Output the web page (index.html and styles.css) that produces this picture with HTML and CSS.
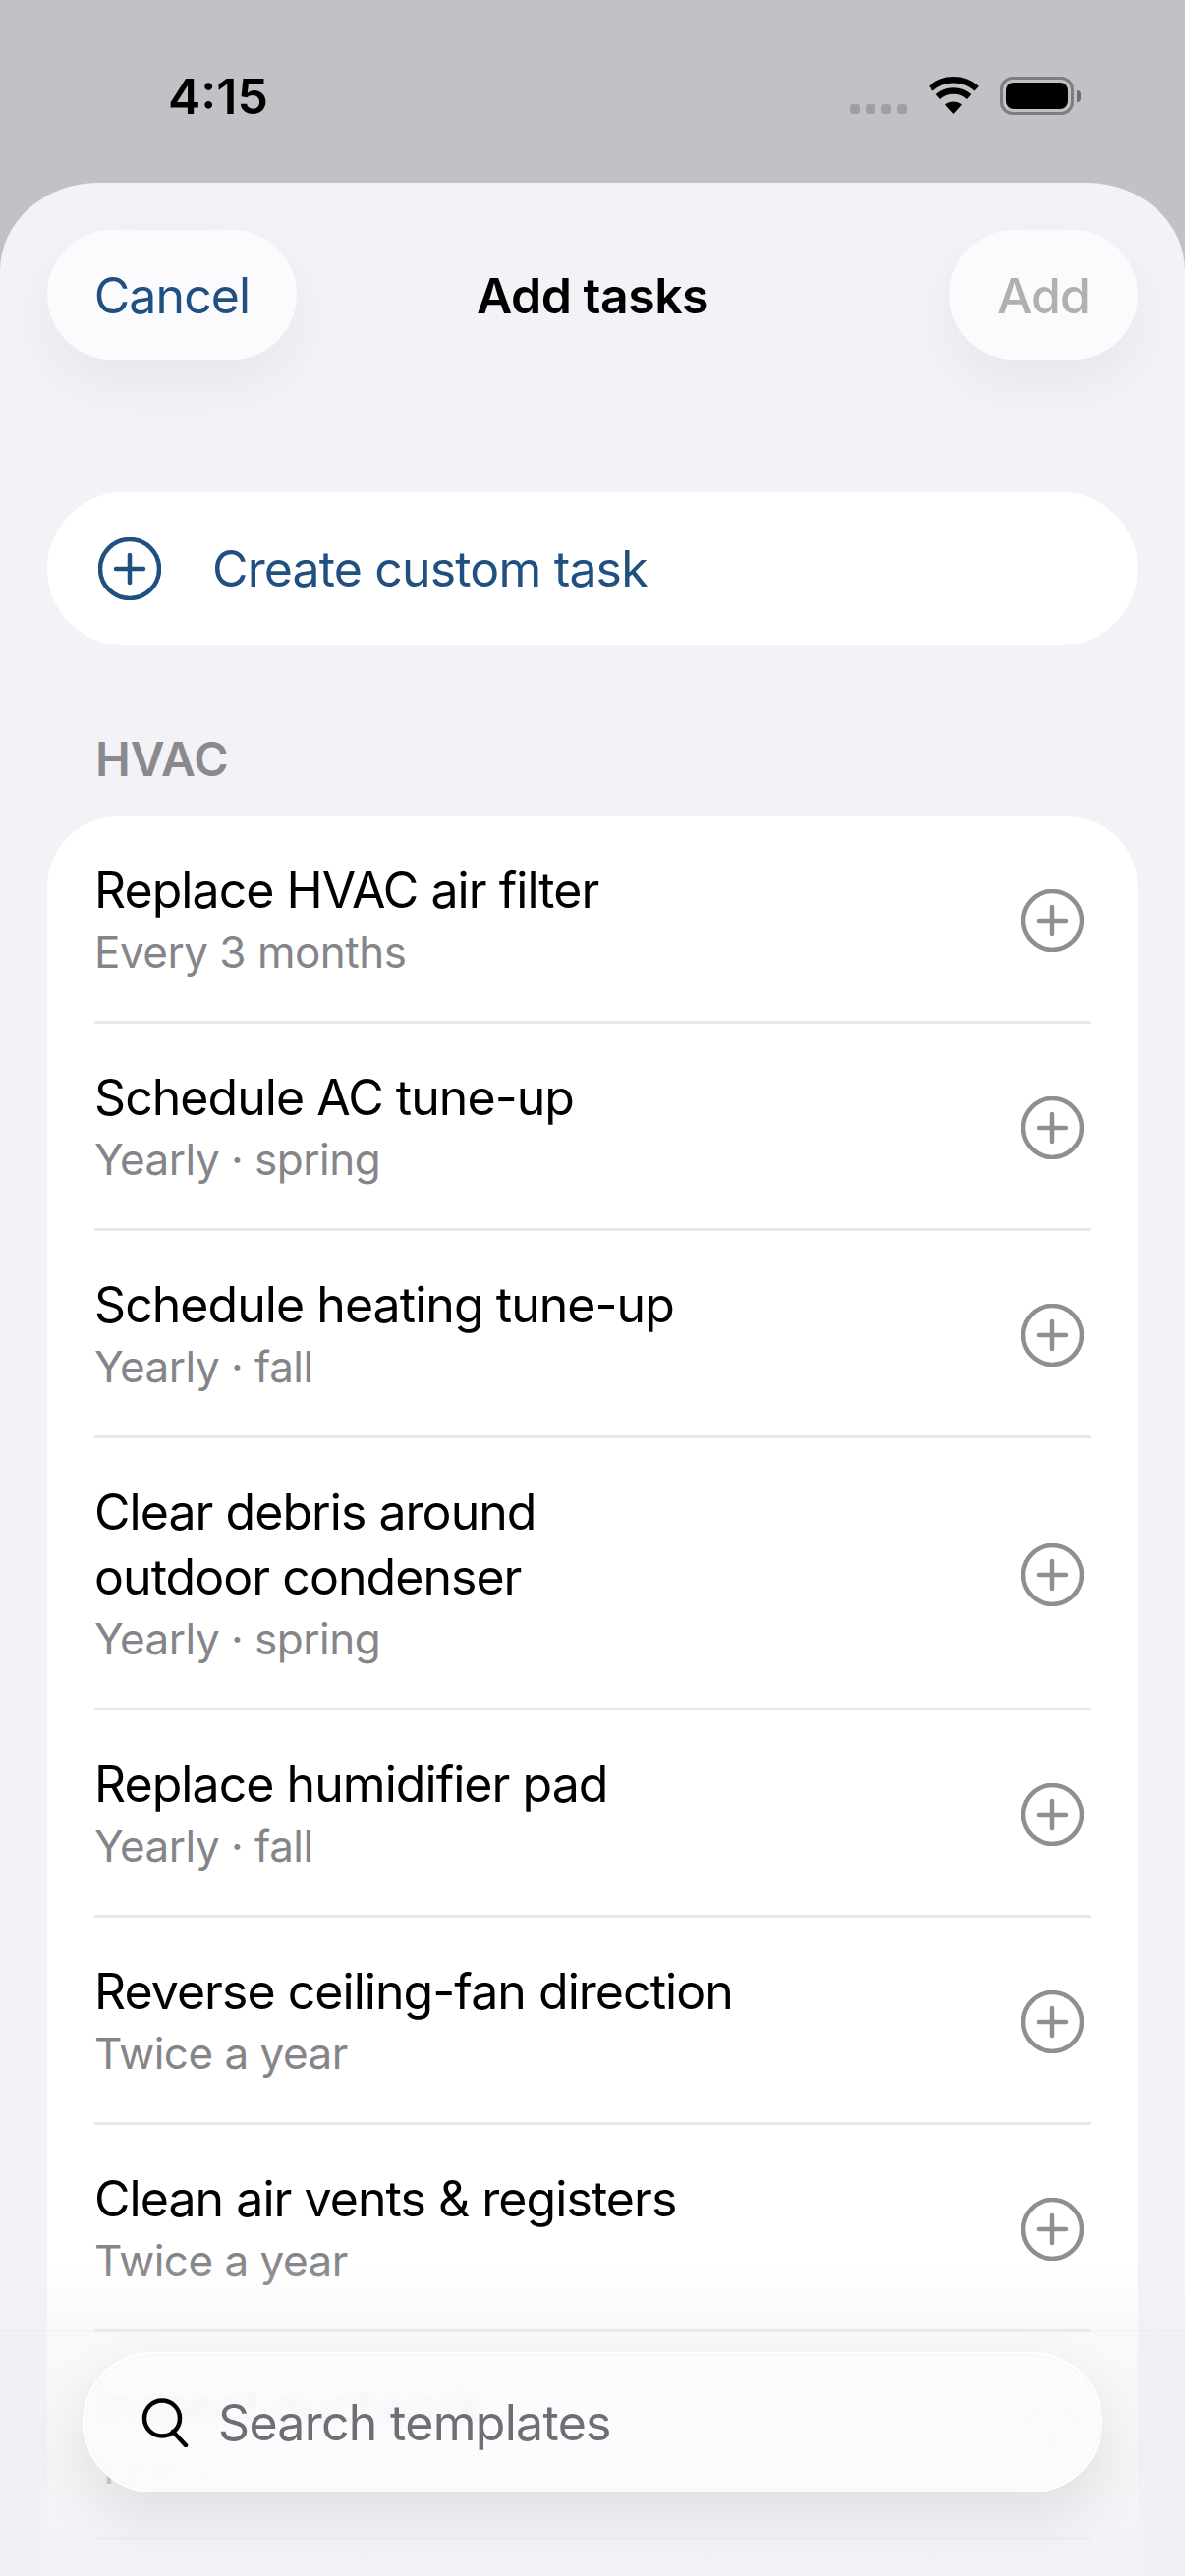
FILE: index.html
```html
<!DOCTYPE html>
<html lang="en">
<head>
    <meta charset="UTF-8">
    <meta name="viewport" content="width=device-width, initial-scale=1.0">
    <title>Add tasks</title>
    <link rel="stylesheet" href="styles.css">
</head>
<body>
<div class="screen">
    <!-- Status bar -->
    <div class="status-bar">
        <span class="time">4:15</span>
        <div class="status-icons">
            <div class="signal-dots"><i></i><i></i><i></i><i></i></div>
            <svg class="wifi" width="51" height="38" viewBox="0 0 51 38">
                <path d="M2.25 12.2A34.75 34.75 0 0 1 48.75 12.2" fill="none" stroke="#000" stroke-width="6.5"/>
                <path d="M9.8 20.5A23.5 23.5 0 0 1 41.2 20.5" fill="none" stroke="#000" stroke-width="6.5"/>
                <path d="M25.5 38L17.1 28.7A12.5 12.5 0 0 1 33.9 28.7Z" fill="#000"/>
            </svg>
            <div class="battery"><div class="battery-level"></div></div>
            <div class="battery-nub"></div>
        </div>
    </div>

    <div class="sheet">
        <div class="nav">
            <button type="button" class="pill cancel">Cancel</button>
            <h1>Add tasks</h1>
            <button type="button" class="pill add">Add</button>
        </div>

        <div class="custom-task">
            <svg class="plus plus-blue" width="64" height="64" viewBox="0 0 64 64">
                <circle cx="32" cy="32" r="30"/>
                <path d="M18 32H46M32 18V46"/>
            </svg>
            <span>Create custom task</span>
        </div>

        <h2>HVAC</h2>

        <div class="task-card">
            <div class="task">
                <div class="task-text">
                    <div class="task-title">Replace HVAC air filter</div>
                    <div class="task-sub">Every 3 months</div>
                </div>
                <svg class="plus" width="64" height="64" viewBox="0 0 64 64"><circle cx="32" cy="32" r="30"/><path d="M18 32H46M32 18V46"/></svg>
            </div>
            <div class="task">
                <div class="task-text">
                    <div class="task-title">Schedule AC tune-up</div>
                    <div class="task-sub">Yearly · spring</div>
                </div>
                <svg class="plus" width="64" height="64" viewBox="0 0 64 64"><circle cx="32" cy="32" r="30"/><path d="M18 32H46M32 18V46"/></svg>
            </div>
            <div class="task">
                <div class="task-text">
                    <div class="task-title">Schedule heating tune-up</div>
                    <div class="task-sub">Yearly · fall</div>
                </div>
                <svg class="plus" width="64" height="64" viewBox="0 0 64 64"><circle cx="32" cy="32" r="30"/><path d="M18 32H46M32 18V46"/></svg>
            </div>
            <div class="task">
                <div class="task-text">
                    <div class="task-title">Clear debris around<br>outdoor condenser</div>
                    <div class="task-sub">Yearly · spring</div>
                </div>
                <svg class="plus" width="64" height="64" viewBox="0 0 64 64"><circle cx="32" cy="32" r="30"/><path d="M18 32H46M32 18V46"/></svg>
            </div>
            <div class="task">
                <div class="task-text">
                    <div class="task-title">Replace humidifier pad</div>
                    <div class="task-sub">Yearly · fall</div>
                </div>
                <svg class="plus" width="64" height="64" viewBox="0 0 64 64"><circle cx="32" cy="32" r="30"/><path d="M18 32H46M32 18V46"/></svg>
            </div>
            <div class="task">
                <div class="task-text">
                    <div class="task-title">Reverse ceiling-fan direction</div>
                    <div class="task-sub">Twice a year</div>
                </div>
                <svg class="plus" width="64" height="64" viewBox="0 0 64 64"><circle cx="32" cy="32" r="30"/><path d="M18 32H46M32 18V46"/></svg>
            </div>
            <div class="task">
                <div class="task-text">
                    <div class="task-title">Clean air vents &amp; registers</div>
                    <div class="task-sub">Twice a year</div>
                </div>
                <svg class="plus" width="64" height="64" viewBox="0 0 64 64"><circle cx="32" cy="32" r="30"/><path d="M18 32H46M32 18V46"/></svg>
            </div>
            <div class="task">
                <div class="task-text">
                    <div class="task-title">Inspect ductwork</div>
                    <div class="task-sub">Yearly</div>
                </div>
                <svg class="plus" width="64" height="64" viewBox="0 0 64 64"><circle cx="32" cy="32" r="30"/><path d="M18 32H46M32 18V46"/></svg>
            </div>
        </div>
    </div>

    <!-- Frosted search bar over the list -->
    <div class="bottom-fade"></div>
    <div class="search-bar">
        <svg width="50" height="50" viewBox="0 0 50 50" fill="none" stroke="#000" stroke-width="4.5" stroke-linecap="round">
            <circle cx="21" cy="20.5" r="18"/>
            <path d="M32 34L45 48"/>
        </svg>
        <span>Search templates</span>
    </div>
</div>
</body>
</html>
```

FILE: styles.css
```css
body {
    margin: 0;
    font-family: Inter, "Liberation Sans", sans-serif;
}
.screen {
    position: relative;
    width: 1206px;
    height: 2622px;
    overflow: hidden;
    background-color: #c2c1c6;
}
.status-bar {
    display: flex;
    justify-content: space-between;
    align-items: flex-start;
    height: 186px;
    padding: 0 106px 0 171px;
    box-sizing: border-box;
}
.time {
    margin-top: 68px;
    font-size: 50px;
    line-height: 60px;
    font-weight: 600;
    color: #000;
}
.status-icons {
    display: flex;
    align-items: flex-start;
    margin-top: 78px;
}
.signal-dots {
    display: flex;
    gap: 6px;
    margin: 28px 22px 0 0;
}
.signal-dots i {
    width: 10px;
    height: 10px;
    border-radius: 3px;
    background-color: #a0a0a3;
}
.battery {
    width: 75px;
    height: 39px;
    margin-left: 22px;
    padding: 3px;
    box-sizing: border-box;
    border: 3px solid #7e7e82;
    border-radius: 13px;
}
.battery-level {
    height: 100%;
    border-radius: 8px;
    background-color: #000;
}
.battery-nub {
    width: 4px;
    height: 12px;
    margin: 14px 0 0 3px;
    border-radius: 0 6px 6px 0;
    background-color: #6f6f73;
}
.sheet {
    height: 2436px;
    padding: 48px 48px 0;
    box-sizing: border-box;
    border-radius: 100px 100px 0 0 / 90px 90px 0 0;
    background-color: #f2f2f7;
}
.nav {
    display: flex;
    justify-content: space-between;
    align-items: center;
    position: relative;
    height: 132px;
}
h1 {
    position: absolute;
    left: 0;
    right: 0;
    margin: 0;
    padding-top: 2px;
    text-align: center;
    font-size: 50px;
    font-weight: 600;
    letter-spacing: -0.5px;
    color: #000;
    pointer-events: none;
}
.pill {
    height: 132px;
    padding-top: 2px;
    border: none;
    border-radius: 66px;
    background-color: #fbfbfe;
    box-shadow: 0 24px 60px rgba(0, 0, 0, 0.05);
    font-family: inherit;
    font-size: 50px;
    letter-spacing: -0.9px;
}
.cancel {
    width: 254px;
    color: #1f5080;
}
.add {
    width: 192px;
    font-weight: 500;
    color: #b0b0b2;
}
.custom-task {
    display: flex;
    align-items: center;
    gap: 52px;
    height: 156px;
    margin-top: 135px;
    padding-left: 52px;
    border-radius: 78px;
    background-color: #fff;
    font-size: 50px;
    letter-spacing: -0.85px;
    color: #1f5080;
}
h2 {
    margin: 93px 0 0 49px;
    font-size: 48px;
    line-height: 46px;
    font-weight: 600;
    color: #8a8a8e;
}
.task-card {
    margin-top: 35px;
    padding-bottom: 120px;
    border-radius: 72px;
    background-color: #fff;
}
.task {
    display: flex;
    align-items: center;
    justify-content: space-between;
    margin: 0 48px;
    padding: 42px 7px 40px 0;
    border-bottom: 3px solid #e8e8ea;
}
.task-title {
    font-size: 50px;
    line-height: 66px;
    letter-spacing: -0.95px;
    color: #000;
}
.task-sub {
    font-size: 44px;
    line-height: 60px;
    letter-spacing: -0.5px;
    color: #858589;
}
.plus {
    flex: none;
    fill: none;
    stroke: #8e8e93;
    stroke-width: 4.5;
    stroke-linecap: round;
}
.task .plus {
    margin-top: 2px;
}
.plus-blue {
    stroke: #1f5080;
}
.bottom-fade {
    position: absolute;
    left: 0;
    right: 0;
    top: 2300px;
    bottom: 0;
    background: linear-gradient(rgba(240, 240, 243, 0) 0, rgba(240, 240, 243, 0.4) 72px, rgba(232, 232, 235, 0.7) 72px, rgba(240, 240, 243, 0.4) 74px, rgba(240, 240, 245, 0.85) 100%);
}
.search-bar {
    position: absolute;
    left: 84px;
    top: 2394px;
    display: flex;
    align-items: center;
    gap: 28px;
    width: 1038px;
    height: 143px;
    padding-left: 58px;
    box-sizing: border-box;
    border: 2px solid rgba(255, 255, 255, 0.9);
    border-radius: 72px;
    background-color: rgba(252, 252, 254, 0.93);
    backdrop-filter: blur(4px);
    box-shadow: 0 24px 60px rgba(0, 0, 0, 0.09), inset 0 0 5px rgba(0, 0, 0, 0.04);
    font-size: 50px;
    letter-spacing: -0.7px;
    color: #6f6f73;
}
```
